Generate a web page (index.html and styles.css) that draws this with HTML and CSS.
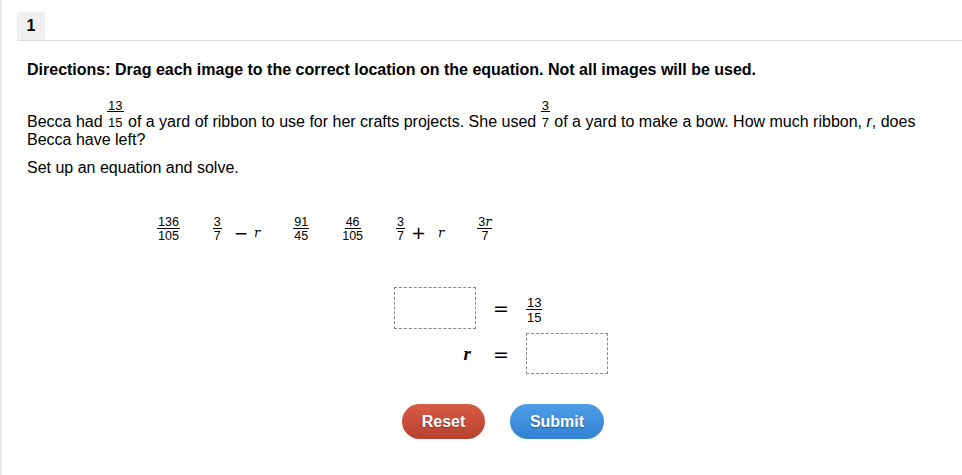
FILE: index.html
```html
<!DOCTYPE html>
<html>
<head>
<meta charset="utf-8">
<link rel="stylesheet" href="styles.css">
</head>
<body>
<div class="page">
  <div class="head">
    <div class="num">1</div>
  </div>
  <div class="content">
    <p class="directions">Directions: Drag each image to the correct location on the equation. Not all images will be used.</p>
    <p class="text">Becca had <span class="frac"><span class="fn">13</span><span class="fd">15</span></span> of a yard of ribbon to use for her crafts projects. She used <span class="frac"><span class="fn">3</span><span class="fd">7</span></span> of a yard to make a bow. How much ribbon, <i>r</i>, does Becca have left?</p>
    <p class="text setup">Set up an equation and solve.</p>

    <div class="tiles">
      <div class="tile"><span class="tf"><span class="tn">136</span><span class="td">105</span></span></div>
      <div class="tile"><span class="tf"><span class="tn">3</span><span class="td">7</span></span><span class="op minus">−</span><span class="var">r</span></div>
      <div class="tile"><span class="tf"><span class="tn">91</span><span class="td">45</span></span></div>
      <div class="tile"><span class="tf"><span class="tn">46</span><span class="td">105</span></span></div>
      <div class="tile"><span class="tf"><span class="tn">3</span><span class="td">7</span></span><span class="op plus">+</span><span class="var">r</span></div>
      <div class="tile"><span class="tf"><span class="tn">3<span class="nvar">r</span></span><span class="td">7</span></span></div>
    </div>

    <div class="equation">
      <div class="drop box1"></div>
      <div class="eq">=</div>
      <div class="rhs"><span class="tf big"><span class="tn">13</span><span class="td">15</span></span></div>
      <div class="lhs-var"><b><i>r</i></b></div>
      <div class="eq">=</div>
      <div class="drop box2"></div>
    </div>

    <div class="buttons">
      <button class="btn reset">Reset</button>
      <button class="btn submit">Submit</button>
    </div>
  </div>
</div>
</body>
</html>
```

FILE: styles.css
```css
* { box-sizing: border-box; }
html, body { margin: 0; padding: 0; background: #fff; }
body {
  font-family: "Liberation Sans", Arial, sans-serif;
  color: #000;
}
.page {
  border-left: 2px solid #e8e8e8;
  min-height: 475px;
  padding-left: 15px;
  padding-top: 12px;
}
.head {
  display: flex;
  border-bottom: 1px solid #dcdcdc;
}
.num {
  width: 28px;
  height: 28px;
  background: #f0f0f0;
  font-weight: bold;
  font-size: 16px;
  display: flex;
  align-items: center;
  justify-content: center;
}
.content {
  padding-left: 10px;
  padding-right: 20px;
}
.directions {
  margin: 20px 0 0;
  font-weight: bold;
  font-size: 16px;
  line-height: 18px;
}
.text {
  margin: 21px 0 0;
  font-size: 16px;
  line-height: 18px;
}
.setup { margin-top: 10px; }
.frac {
  display: inline-block;
  text-align: center;
  vertical-align: baseline;
}
.fn {
  display: block;
  font-size: 13px;
  line-height: 11px;
  border-bottom: 1px solid #000;
  padding: 0 1px;
}
.fd {
  display: block;
  font-size: 13px;
  line-height: 13px;
  padding-top: 4px;
}

.tiles {
  display: flex;
  align-items: center;
  gap: 33px;
  margin: 40px 0 0 130px;
}
.tile {
  display: flex;
  align-items: center;
}
.tf {
  display: inline-flex;
  flex-direction: column;
  align-items: center;
  font-size: 12.5px;
}
.tn {
  line-height: 10px;
  padding: 0 1px 1px;
  border-bottom: 1px solid #000;
}
.td {
  line-height: 10px;
  padding-top: 2px;
}
.nvar {
  font-family: "DejaVu Serif", serif;
  font-style: italic;
  font-size: 13px;
}
.op {
  font-family: "DejaVu Sans", sans-serif;
  line-height: 14px;
  padding-top: 8px;
}
.minus { font-size: 17px; margin: 0 6px 0 12px; }
.plus { font-size: 18px; margin: 0 12px 0 6px; }
.var {
  font-family: "DejaVu Serif", serif;
  font-style: italic;
  font-size: 13px;
  line-height: 12px;
  padding-top: 8px;
}

.equation {
  display: grid;
  grid-template-columns: 82px 50px 82px;
  grid-template-rows: 42px 41px;
  row-gap: 4px;
  margin: 46px 0 0 367px;
  align-items: center;
}
.drop {
  border: 1px dashed #888;
  height: 100%;
}
.eq {
  font-family: "DejaVu Sans", sans-serif;
  font-size: 19px;
  line-height: 20px;
  text-align: center;
}
.tf.big { font-size: 13px; }
.tf.big .tn { line-height: 11px; }
.tf.big .td { line-height: 11px; padding-top: 2px; }
.lhs-var {
  justify-self: end;
  padding-right: 5px;
  font-family: "Liberation Serif", serif;
  font-size: 19px;
}

.buttons {
  display: flex;
  gap: 25px;
  margin: 30px 0 0 375px;
}
.btn {
  height: 35px;
  border: none;
  border-radius: 18px;
  color: #fff;
  font-family: "Liberation Sans", Arial, sans-serif;
  font-weight: bold;
  font-size: 16px;
  text-shadow: 0 1px 1px rgba(0,0,0,0.35);
  padding: 0;
  cursor: pointer;
}
.reset {
  width: 83px;
  background: linear-gradient(#d75c47, #b7402e);
}
.submit {
  width: 94px;
  background: linear-gradient(#4c9ce6, #3382d3);
}
```
